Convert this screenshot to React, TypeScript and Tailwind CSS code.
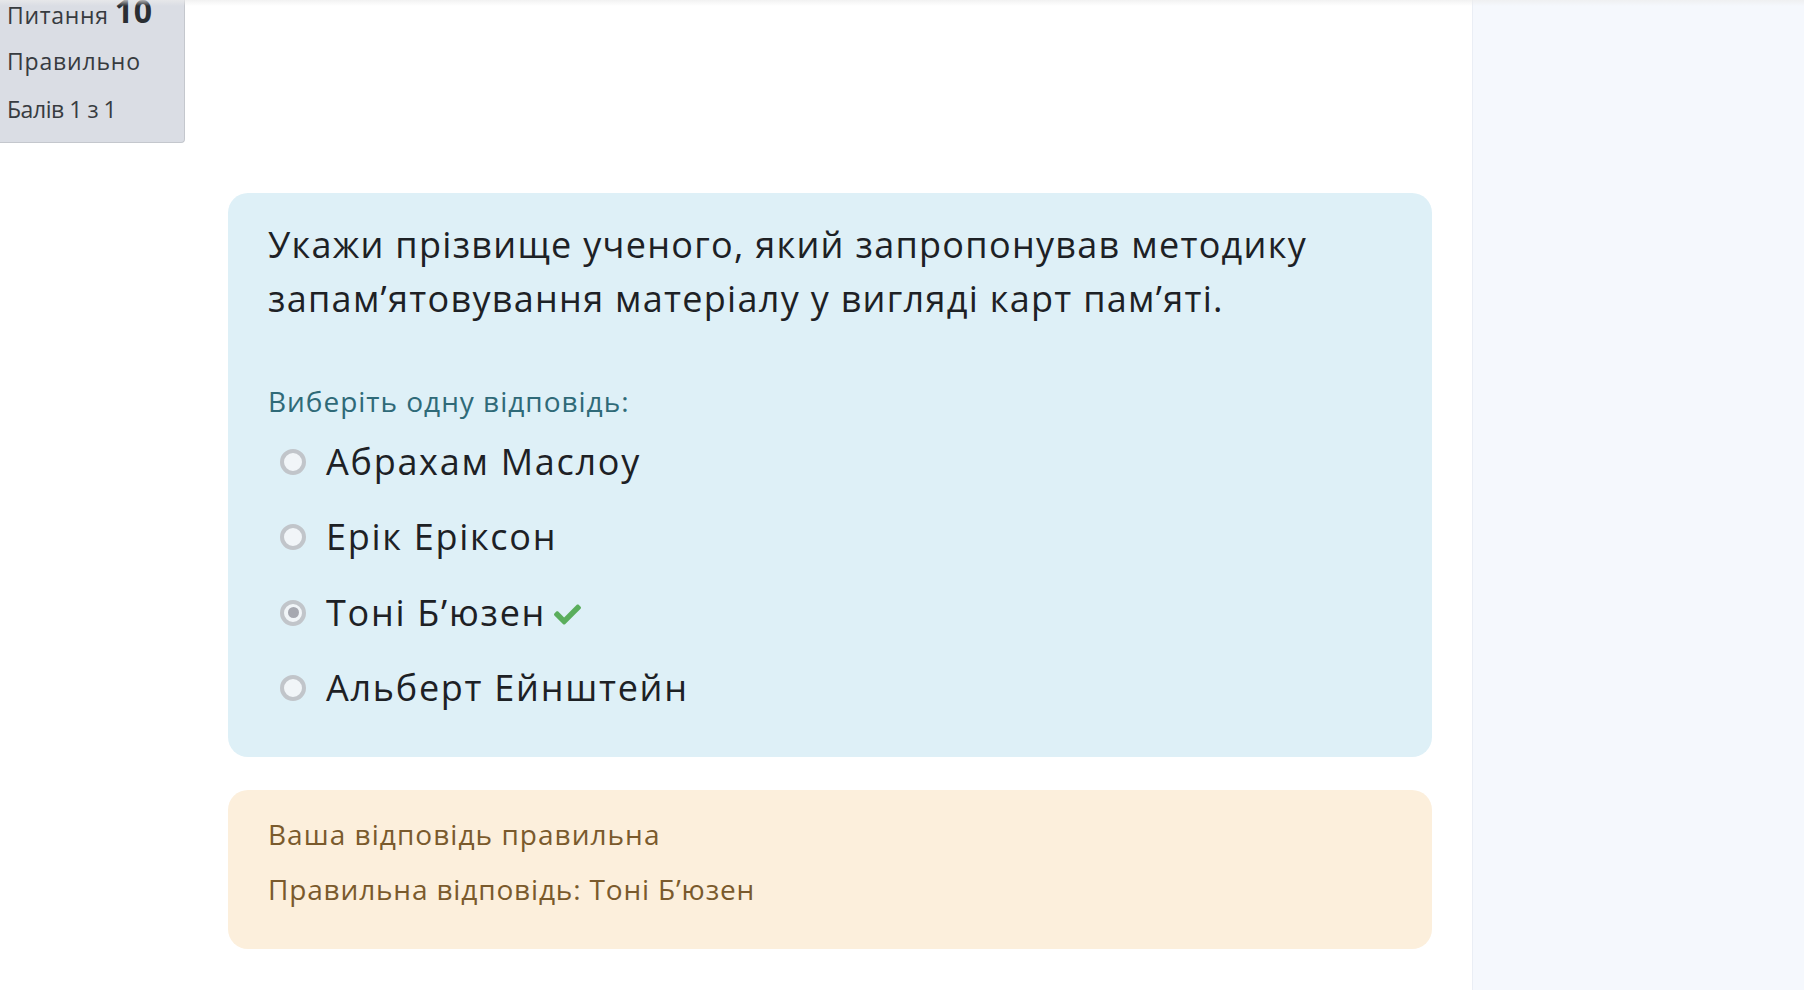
import React from "react";
import { FaCheck } from "react-icons/fa";

const font = { fontFamily: '"Open Sans", "Noto Sans", sans-serif' };

function Radio({ checked }: { checked?: boolean }) {
  return (
    <span className="flex h-[26px] w-[26px] shrink-0 items-center justify-center rounded-full border-[4px] border-[#c1c5ca] bg-[#f1f5f8]">
      {checked && <span className="h-[11px] w-[11px] rounded-full bg-[#a6a8b0]" />}
    </span>
  );
}

const options = [
  { label: "Абрахам Маслоу" },
  { label: "Ерік Еріксон" },
  { label: "Тоні Б’юзен", checked: true },
  { label: "Альберт Ейнштейн" },
];

export default function App() {
  return (
    <div className="relative flex h-[990px] w-[1804px] overflow-hidden bg-white" style={font}>
      <div className="pointer-events-none absolute left-0 right-0 top-0 z-10 h-[6px] bg-gradient-to-b from-[#ececec] to-transparent opacity-70" />
      <main className="flex w-[1472px] flex-col">
        <div className="flex h-[143px] w-[185px] flex-col rounded-br-[4px] border-b border-r border-[#c4c7cd] bg-[#dadde4] pl-[7px] text-[#373b40]">
          <div className="-mt-[9px] flex h-[36px] items-end text-[23px] leading-none tracking-[0.03em]">
            <span>Питання</span>
            <span className="ml-[6px] text-[32px] font-bold leading-none text-[#2a2e33]">10</span>
          </div>
          <div className="mt-[22px] text-[23px] leading-[24px] tracking-[0.035em]">Правильно</div>
          <div className="mt-[24px] text-[23px] leading-[24px] tracking-[-0.02em]">Балів 1 з 1</div>
        </div>

        <div className="ml-[228px] mr-[40px] mt-[50px] flex flex-col">
          <section className="rounded-[20px] bg-[#def0f7] px-[40px] pb-[31px] pt-[25px]">
            <p className="text-[36px] leading-[54px] tracking-[0.036em] text-[#1d2125]">
              Укажи прізвище ученого, який запропонував методику запам’ятовування матеріалу у вигляді карт пам’яті.
            </p>
            <div className="mt-[55px] text-[28px] leading-[40px] tracking-[0.035em] text-[#2f6a78]">
              Виберіть одну відповідь:
            </div>
            <div className="mt-[3px] flex flex-col">
              {options.map((o) => (
                <div key={o.label} className="flex h-[75.5px] items-center pl-[12px]">
                  <Radio checked={o.checked} />
                  <span className="ml-[20px] text-[36px] leading-none tracking-[0.048em] text-[#1d2125]">
                    {o.label}
                  </span>
                  {o.checked && <FaCheck className="ml-[8px] mt-[4px] text-[#5aae5c]" size={27} />}
                </div>
              ))}
            </div>
          </section>

          <section className="mt-[33px] flex h-[159px] flex-col rounded-[20px] bg-[#fcefdc] px-[40px] pt-[24px] text-[#7a5a2c]">
            <div className="text-[28px] leading-[40px] tracking-[0.037em]">Ваша відповідь правильна</div>
            <div className="mt-[15px] text-[28px] leading-[40px] tracking-[0.03em]">Правильна відповідь: Тоні Б’юзен</div>
          </section>
        </div>
      </main>
      <aside className="h-full flex-1 border-l border-[#eaeef5] bg-[#f5f8fd]" />
    </div>
  );
}
